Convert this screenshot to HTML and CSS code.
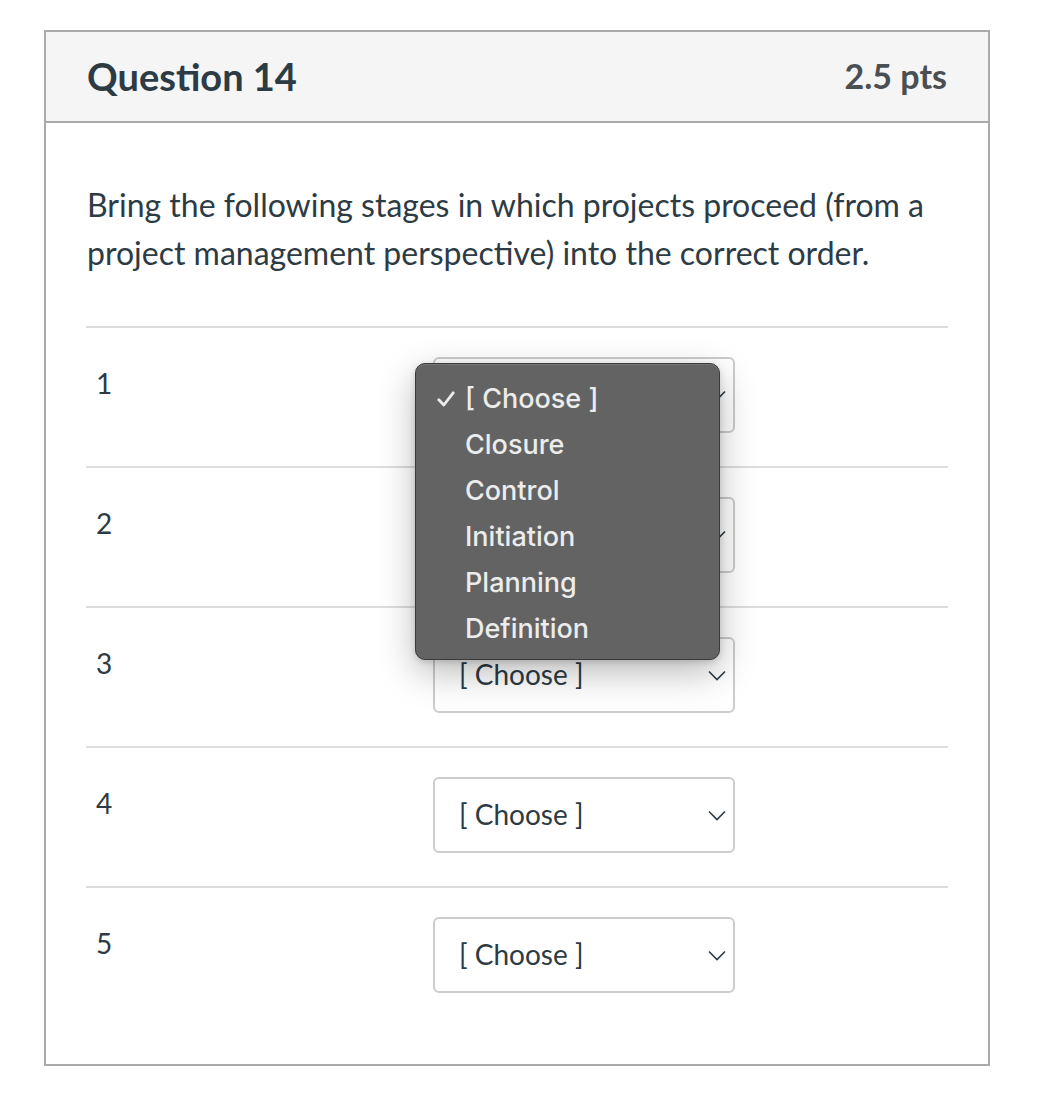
FILE: index.html
```html
<!DOCTYPE html>
<html lang="en">
<head>
<meta charset="utf-8">
<title>Question 14</title>
<link rel="stylesheet" href="styles.css">
</head>
<body>
<div class="quiz">
  <div class="header">
    <h2 class="title">Question 14</h2>
    <div class="pts">2.5 pts</div>
  </div>
  <div class="body">
    <p class="question">Bring the following stages in which projects proceed (from a project management perspective) into the correct order.</p>
    <div class="rows">
      <div class="row">
        <div class="num">1</div>
        <div class="select"><span>[ Choose ]</span><svg class="chev" viewBox="0 0 18 11" width="18" height="11"><path d="M1 1.5 L9 9.5 L17 1.5" fill="none" stroke="#2d3b45" stroke-width="1.6"/></svg></div>
        <div class="menu">
          <div class="item"><svg class="check" viewBox="0 0 18 16" width="18" height="16"><path d="M1.8 8.8 L6.8 14 L16.2 1.8" fill="none" stroke="#ececec" stroke-width="2.8" stroke-linecap="round" stroke-linejoin="round"/></svg>[ Choose ]</div>
          <div class="item">Closure</div>
          <div class="item">Control</div>
          <div class="item">Initiation</div>
          <div class="item">Planning</div>
          <div class="item">Definition</div>
        </div>
      </div>
      <div class="row">
        <div class="num">2</div>
        <div class="select"><span>[ Choose ]</span><svg class="chev" viewBox="0 0 18 11" width="18" height="11"><path d="M1 1.5 L9 9.5 L17 1.5" fill="none" stroke="#2d3b45" stroke-width="1.6"/></svg></div>
      </div>
      <div class="row">
        <div class="num">3</div>
        <div class="select"><span>[ Choose ]</span><svg class="chev" viewBox="0 0 18 11" width="18" height="11"><path d="M1 1.5 L9 9.5 L17 1.5" fill="none" stroke="#2d3b45" stroke-width="1.6"/></svg></div>
      </div>
      <div class="row">
        <div class="num">4</div>
        <div class="select"><span>[ Choose ]</span><svg class="chev" viewBox="0 0 18 11" width="18" height="11"><path d="M1 1.5 L9 9.5 L17 1.5" fill="none" stroke="#2d3b45" stroke-width="1.6"/></svg></div>
      </div>
      <div class="row">
        <div class="num">5</div>
        <div class="select"><span>[ Choose ]</span><svg class="chev" viewBox="0 0 18 11" width="18" height="11"><path d="M1 1.5 L9 9.5 L17 1.5" fill="none" stroke="#2d3b45" stroke-width="1.6"/></svg></div>
      </div>
    </div>
  </div>
</div>
</body>
</html>
```
FILE: styles.css
```css
* { box-sizing: border-box; }
html, body { margin: 0; padding: 0; background: #fff; }
body {
  font-family: Lato, "Open Sans", sans-serif;
  color: #2d3b45;
}
.quiz {
  margin: 30px 0 0 44px;
  width: 946px;
  border: 2px solid #aaaaaa;
}
.header {
  height: 91px;
  background: #f5f5f5;
  border-bottom: 2px solid #aaaaaa;
  display: flex;
  align-items: center;
  justify-content: space-between;
  padding: 0 41px 2px 41px;
}
.title {
  margin: 0;
  font-size: 38px;
  font-weight: 700;
  color: #2d3b45;
}
.pts {
  font-size: 34px;
  font-weight: 700;
  color: #4a4f53;
}
.body {
  padding: 58px 40px 38px 40px;
}
.question {
  margin: 0 0 49px 1px;
  font-size: 32px;
  line-height: 48px;
  color: #2d3b45;
}
.row {
  position: relative;
  border-top: 2px solid #dddddd;
  height: 140px;
  display: flex;
  align-items: flex-start;
  padding-top: 29px;
}
.num {
  width: 347px;
  padding-left: 10px;
  margin-top: 11px;
  font-size: 28px;
  line-height: 30px;
}
.select {
  width: 302px;
  height: 76px;
  border: 2px solid #cccccc;
  border-radius: 6px;
  background: #fff;
  display: flex;
  align-items: center;
  justify-content: space-between;
  padding: 0 7px 2px 24px;
  font-size: 28px;
  color: #2d3b45;
}
.chev { display: block; margin-top: 2px; }
.menu {
  position: absolute;
  left: 329px;
  top: 35px;
  width: 305px;
  height: 297px;
  background: #636363;
  border: 1px solid #3a3a3a;
  border-radius: 10px;
  box-shadow: 0 12px 36px rgba(0,0,0,0.28), 0 2px 6px rgba(0,0,0,0.15), inset 0 1px 0 rgba(255,255,255,0.12);
  padding: 12px 0 8px 49px;
  font-family: Inter, "Noto Sans", sans-serif;
  font-size: 27px;
  font-weight: 500;
  color: #ececec;
  z-index: 2;
}
.item {
  position: relative;
  height: 46px;
  line-height: 46px;
}
.check {
  position: absolute;
  left: -28px;
  top: 15px;
}
```
